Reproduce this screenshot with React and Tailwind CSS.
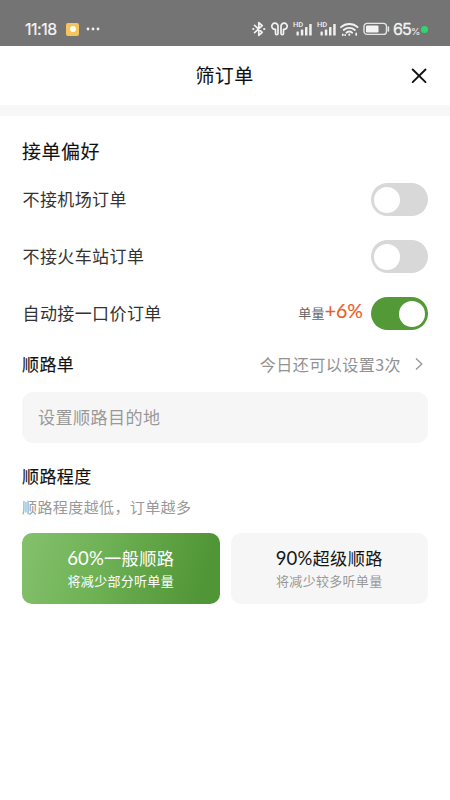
import React, { useState } from 'react';

function SignalBars() {
  return (
    <div className="w-[21px] h-[16px] relative">
      <span className="absolute left-0 top-0 text-[7.5px] leading-[7px] font-medium text-[#eee] font-['Roboto',sans-serif]">
        HD
      </span>
      <svg viewBox="0 0 21 16" width="21" height="16" fill="#f0f0f0">
        <rect x="3.5" y="10.5" width="2.3" height="4" rx="0.6" />
        <rect x="7.8" y="8.5" width="2.5" height="6" rx="0.6" />
        <rect x="12" y="6" width="2.5" height="8.5" rx="0.6" />
        <rect x="16.2" y="3" width="2.5" height="11.5" rx="0.6" />
      </svg>
    </div>
  );
}

function StatusBar() {
  return (
    <div className="h-[46px] bg-[#747474] pt-[14px] pl-[25px] pr-[22px] flex items-start justify-between text-[#f4f4f4]">
      <div className="flex items-center h-[30px]">
        <span className="w-[33px] text-[16px] leading-[30px] tracking-[-0.5px] whitespace-nowrap font-['Inter',sans-serif] [-webkit-text-stroke:0.2px]">
          11:18
        </span>
        <span className="ml-[8px] w-[13px] h-[13px] rounded-[2px] bg-[#f3c55b] flex items-center justify-center">
          <span className="w-[6px] h-[6px] rounded-full bg-[#fffdf0]" />
        </span>
        <svg className="ml-[7px]" width="14" height="4" viewBox="0 0 14 4" fill="#f0f0f0">
          <circle cx="2" cy="2" r="1.4" />
          <circle cx="7" cy="2" r="1.4" />
          <circle cx="12" cy="2" r="1.4" />
        </svg>
      </div>

      <div className="flex items-center h-[30px]">
        {/* bluetooth */}
        <svg
          width="14"
          height="16"
          viewBox="0 0 14 16"
          fill="none"
          stroke="#f2f2f2"
          strokeWidth="1.7"
          strokeLinejoin="round"
          strokeLinecap="round"
        >
          <path d="M2.6 4.4 10.2 11.3 6.8 14.4V1.6L10.2 4.7 2.6 11.6" />
          <path d="M1.3 8h.1M12.2 8h.1" strokeWidth="2.2" />
        </svg>
        {/* earbuds */}
        <svg
          className="ml-[5px]"
          width="17"
          height="16"
          viewBox="0 0 17 16"
          fill="none"
          stroke="#f2f2f2"
          strokeWidth="1.7"
          strokeLinecap="round"
          strokeLinejoin="round"
        >
          <path d="M7 5.4A3.1 3.1 0 1 0 4.5 8.3V12.5a1.25 1.25 0 0 0 2.5 0V5.4Z" />
          <path d="M10 5.4A3.1 3.1 0 1 1 12.5 8.3V12.5a1.25 1.25 0 0 1-2.5 0V5.4Z" />
        </svg>
        <div className="ml-[5px] flex gap-[3px]">
          <SignalBars />
          <SignalBars />
        </div>
        {/* wifi */}
        <svg
          className="ml-[2px]"
          width="20"
          height="16"
          viewBox="0 0 20 16"
          fill="none"
          stroke="#f2f2f2"
          strokeWidth="1.8"
          strokeLinecap="round"
        >
          <path d="M1 6.2a12.4 12.4 0 0 1 16.6 0" />
          <path d="M3.7 9a8.3 8.3 0 0 1 11.2 0" />
          <path d="M6.4 11.7a4.6 4.6 0 0 1 5.8 0" />
          <circle cx="9.3" cy="13.7" r="1.1" fill="#f2f2f2" stroke="none" />
          <path d="M2.8 14.2v-.8M5.2 14.2v-.4M16.2 12.4v1.6" strokeWidth="1.7" />
        </svg>
        {/* battery */}
        <svg className="ml-[3px]" width="28" height="14" viewBox="0 0 28 14" fill="none">
          <rect x="1" y="1.4" width="22.5" height="11" rx="3.2" stroke="#e6e6e6" strokeWidth="1.4" />
          <rect x="3" y="3.4" width="12.5" height="7" rx="1.2" fill="#f4f4f4" />
          <path d="M25.4 5v4" stroke="#e6e6e6" strokeWidth="1.6" strokeLinecap="round" />
        </svg>
        <span className="ml-[2px] w-[28px] flex items-baseline whitespace-nowrap font-['Inter',sans-serif]">
          <span className="text-[16px] tracking-[-0.8px] [-webkit-text-stroke:0.3px]">65</span>
          <span className="text-[9.5px]">%</span>
        </span>
        <span className="w-[7px] h-[7px] rounded-full bg-[#2fd66f]" />
      </div>
    </div>
  );
}

function Switch({ checked, onChange }) {
  return (
    <button
      role="switch"
      aria-checked={checked}
      onClick={() => onChange(!checked)}
      className={
        checked
          ? 'w-[57px] h-[33px] rounded-full px-[3px] flex items-center justify-end bg-[#549938]'
          : 'w-[57px] h-[33px] rounded-full px-[3px] flex items-center justify-start bg-[#d8d8d8]'
      }
    >
      <span className="w-[26px] h-[26px] rounded-full bg-white" />
    </button>
  );
}

function PreferenceRow({ label, extra, checked, onChange }) {
  return (
    <div className="h-[57px] flex items-center">
      <span className="mr-auto mb-[2px] pl-[0.5px] text-[17px] tracking-[0.4px] text-[#333]">
        {label}
      </span>
      {extra}
      <Switch checked={checked} onChange={onChange} />
    </div>
  );
}

function DegreeCard({ percent, title, desc, active, onClick }) {
  return (
    <button
      onClick={onClick}
      className={
        active
          ? 'h-[71px] rounded-[10px] flex flex-col items-center pt-[12px] bg-linear-[105deg,#84c16c,#6fb155_40%,#509536_90%] text-white'
          : 'h-[71px] rounded-[10px] flex flex-col items-center pt-[12px] bg-[#f6f6f6] text-[#151515]'
      }
    >
      <span className="flex items-baseline text-[17.2px] tracking-[0.4px] leading-[26px]">
        <span className="font-['Lato',sans-serif] text-[18.5px] tracking-[0.2px]">{percent}</span>
        {title}
      </span>
      <span
        className={
          active
            ? 'mt-px text-[13px] tracking-[0.3px] leading-[18px] text-white'
            : 'mt-px text-[13px] tracking-[0.3px] leading-[18px] text-[#999]'
        }
      >
        {desc}
      </span>
    </button>
  );
}

export default function App() {
  const [airport, setAirport] = useState(false);
  const [station, setStation] = useState(false);
  const [fixedPrice, setFixedPrice] = useState(true);
  const [degree, setDegree] = useState(60);

  return (
    <div className="w-[450px] h-[800px] overflow-hidden bg-white flex flex-col font-['Noto_Sans_CJK_SC',sans-serif]">
      <StatusBar />

      <header className="h-[59px] grid grid-cols-[1fr_auto_1fr] items-center pl-[22px] pr-[23px]">
        <span />
        <h1 className="mb-px text-[19px] tracking-[0.4px] leading-[28px] text-[#111] [-webkit-text-stroke:0.1px]">
          筛订单
        </h1>
        <button aria-label="关闭" className="justify-self-end">
          <svg
            width="16"
            height="16"
            viewBox="0 0 16 16"
            stroke="#111"
            strokeWidth="1.9"
            strokeLinecap="round"
          >
            <path d="M1.7 1.5 14.5 14.1M14.5 1.5 1.7 14.1" />
          </svg>
        </button>
      </header>
      <div className="h-[11px] bg-[#f7f7f7]" />

      <main className="px-[22px] pt-[21px] flex flex-col">
        <h2 className="text-[19px] tracking-[0.5px] leading-[28px] text-[#111] [-webkit-text-stroke:0.1px]">
          接单偏好
        </h2>

        <div className="mt-[6px] flex flex-col">
          <PreferenceRow label="不接机场订单" checked={airport} onChange={setAirport} />
          <PreferenceRow label="不接火车站订单" checked={station} onChange={setStation} />
          <PreferenceRow
            label="自动接一口价订单"
            checked={fixedPrice}
            onChange={setFixedPrice}
            extra={
              <span className="flex items-center mr-[8px] whitespace-nowrap">
                <span className="mb-px text-[13px] tracking-[0.3px] text-[#666]">单量</span>
                <span className="text-[19.5px] leading-[24px] mb-[5px] text-[#e8602c] font-['Lato',sans-serif] [-webkit-text-stroke:0.15px]">
                  +6%
                </span>
              </span>
            }
          />
        </div>

        <div className="mt-[8px] flex items-center h-[28px]">
          <h2 className="mr-auto text-[17px] tracking-[0.4px] text-[#111] [-webkit-text-stroke:0.1px]">
            顺路单
          </h2>
          <span className="text-[16.1px] tracking-[0.4px] text-[#929292]">今日还可以设置3次</span>
          <svg
            className="ml-[13px] mr-[4px]"
            width="10"
            height="14"
            viewBox="0 0 10 14"
            fill="none"
            stroke="#999"
            strokeWidth="1.4"
          >
            <path d="M2 1.5 7.8 7 2 12.5" />
          </svg>
        </div>

        <div className="mt-[14px] h-[51px] rounded-[11px] bg-[#f6f6f6] px-[16px] pb-[2px] flex items-center text-[17.1px] tracking-[0.4px] text-[#999]">
          设置顺路目的地
        </div>

        <h2 className="mt-[20px] text-[17px] tracking-[0.4px] leading-[26px] text-[#111] [-webkit-text-stroke:0.1px]">
          顺路程度
        </h2>
        <p className="mt-[6px] text-[15px] tracking-[0.4px] leading-[24px] text-[#999]">
          顺路程度越低，订单越多
        </p>

        <div className="mt-[14px] grid grid-cols-2 gap-[11px]">
          <DegreeCard
            percent="60%"
            title="一般顺路"
            desc="将减少部分听单量"
            active={degree === 60}
            onClick={() => setDegree(60)}
          />
          <DegreeCard
            percent="90%"
            title="超级顺路"
            desc="将减少较多听单量"
            active={degree === 90}
            onClick={() => setDegree(90)}
          />
        </div>
      </main>
    </div>
  );
}
